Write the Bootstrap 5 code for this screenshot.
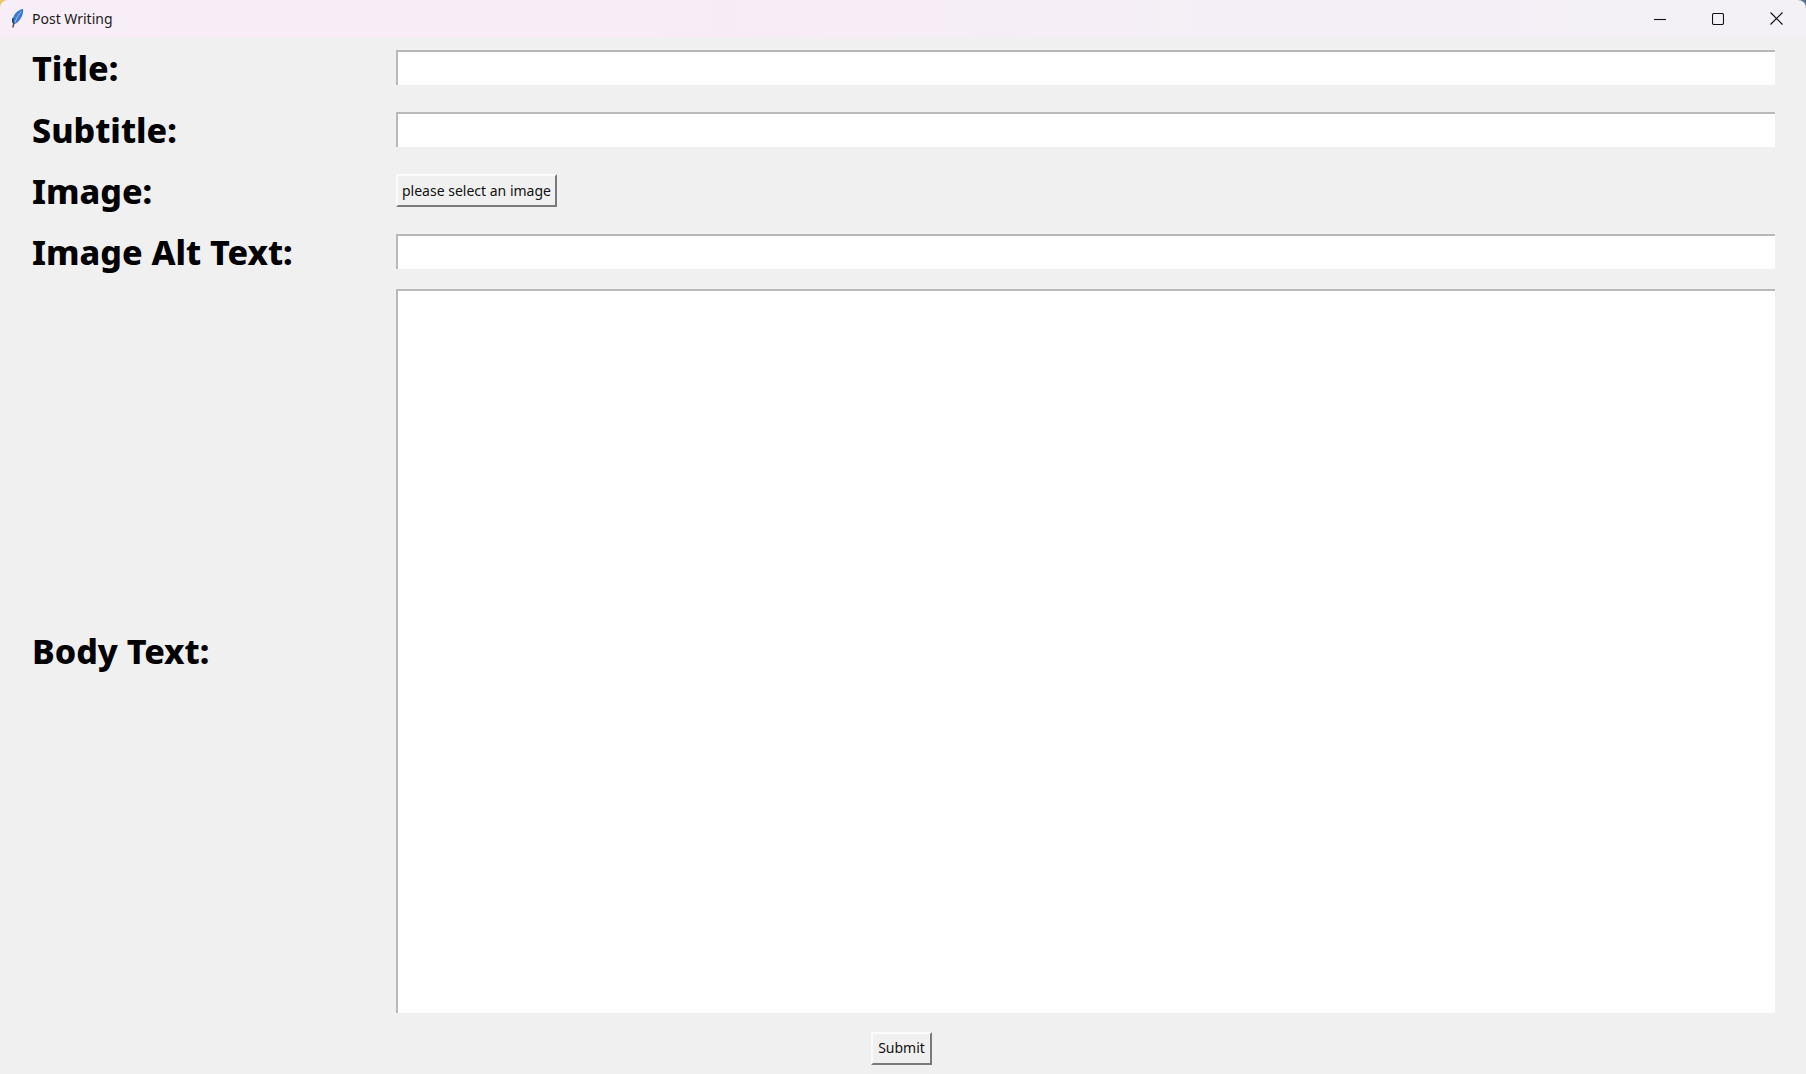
<!DOCTYPE html>
<html lang="en">

<head>
    <meta charset="UTF-8">
    <title>Post Writing</title>
    <link href="https://cdn.jsdelivr.net/npm/bootstrap@5.3.3/dist/css/bootstrap.min.css" rel="stylesheet">
    <style>
        html, body {
            height: 100%;
        }

        body {
            background: #f0f0f0;
            overflow: hidden;
        }

        .app-window {
            height: 1074px;
        }

        /* wallpaper showing through the rounded window corners */
        .title-holder {
            background: linear-gradient(90deg, #e9c766 50%, #5d7490 50%);
        }

        .title-strip {
            height: 37px;
            border-radius: 8px 8px 0 0;
            background: linear-gradient(90deg, #f8eef7 0%, #f8ecf6 35%, #f4eff6 70%, #f3f0f6 100%);
            font-family: "Noto Sans", "Open Sans", sans-serif;
            font-size: 14px;
            color: #1a1a1a;
            padding-left: 10px;
            padding-right: 1px;
        }

        .title-name {
            margin-left: 6px;
        }

        .win-btn {
            width: 58px;
            height: 37px;
        }

        .form-area {
            display: grid;
            grid-template-columns: 396px 1fr;
            grid-template-rows: 62px 62px 61px 61px 736px 55px;
        }

        .field-label {
            font-family: "Noto Sans", "DejaVu Sans", sans-serif;
            font-weight: 800;
            font-size: 34px;
            color: #000;
            padding-left: 32px;
        }

        .field-cell {
            padding-right: 31px;
            padding-bottom: 2px;
        }

        .body-cell {
            padding-bottom: 0;
        }

        .tk-entry.form-control {
            height: 35px;
            padding: 0 4px;
            border-radius: 0;
            border: 0;
            border-top: 2px solid #b9b9b9;
            border-left: 2px solid #b9b9b9;
            background: #fff;
            box-shadow: none;
            font-size: 14px;
        }

        .tk-text.form-control {
            height: 724px;
            resize: none;
        }

        .tk-btn.btn {
            font-family: "Noto Sans", "Open Sans", sans-serif;
            font-size: 14px;
            line-height: 1;
            height: 33px;
            padding: 0 4px;
            color: #111;
            background: #f0f0f0;
            border-radius: 0;
            border: 0;
            border-top: 2px solid #fbfbfb;
            border-left: 2px solid #fbfbfb;
            border-right: 2px solid #7a7a7a;
            border-bottom: 2px solid #7a7a7a;
        }

        .tk-btn.submit-btn {
            width: 61px;
            padding: 0;
        }

        .submit-row {
            grid-column: 1 / span 2;
            padding-right: 3px;
            padding-top: 3px;
        }
    </style>
</head>

<body>
    <div class="app-window d-flex flex-column">
        <!-- Window title bar -->
        <div class="title-holder">
            <div class="title-strip d-flex align-items-center justify-content-between">
                <div class="d-flex align-items-center">
                    <svg width="16" height="20" viewBox="0 0 16 20" aria-hidden="true">
                        <path d="M13 0C9 .5 4.500 4 3 9l-.5 4.500L4.500 15C8 14 11 10 12.500 5.500 13.200 3.500 13.400 1.500 13 0z" fill="#3a7ad0"/>
                        <path d="M11.500 2.500C8.500 5 6.500 9 5 13.500" stroke="#a9cdf0" stroke-width=".9" fill="none"/>
                        <path d="M3 9c-.5 2-.5 4.500 1 6" stroke="#26344d" stroke-width="1.300" fill="none"/>
                        <path d="M4 14l-1.200 4.500" stroke="#555" stroke-width="1.500" fill="none"/>
                    </svg>
                    <span class="title-name">Post Writing</span>
                </div>
                <div class="d-flex">
                    <div class="win-btn d-flex align-items-center justify-content-center">
                        <svg width="12" height="12" viewBox="0 0 12 12" aria-hidden="true"><path d="M0 6.500h12" stroke="#111" stroke-width="1.100"/></svg>
                    </div>
                    <div class="win-btn d-flex align-items-center justify-content-center">
                        <svg width="12" height="12" viewBox="0 0 12 12" aria-hidden="true"><rect x=".5" y=".5" width="11" height="11" rx="1.500" fill="none" stroke="#111" stroke-width="1.100"/></svg>
                    </div>
                    <div class="win-btn d-flex align-items-center justify-content-center">
                        <svg width="13" height="13" viewBox="0 0 13 13" aria-hidden="true"><path d="M.5.500l12 12M12.500.500l-12 12" stroke="#111" stroke-width="1.200"/></svg>
                    </div>
                </div>
            </div>
        </div>

        <!-- Post form -->
        <form class="form-area flex-grow-1">
            <label class="field-label d-flex align-items-center">Title:</label>
            <div class="field-cell d-flex align-items-center"><input class="form-control tk-entry"></div>

            <label class="field-label d-flex align-items-center">Subtitle:</label>
            <div class="field-cell d-flex align-items-center"><input class="form-control tk-entry"></div>

            <label class="field-label d-flex align-items-center">Image:</label>
            <div class="field-cell d-flex align-items-center"><button type="button" class="btn tk-btn">please select an image</button></div>

            <label class="field-label d-flex align-items-center">Image Alt Text:</label>
            <div class="field-cell d-flex align-items-center"><input class="form-control tk-entry"></div>

            <label class="field-label d-flex align-items-center">Body Text:</label>
            <div class="field-cell body-cell d-flex align-items-center"><textarea class="form-control tk-entry tk-text"></textarea></div>

            <div class="submit-row d-flex align-items-center justify-content-center">
                <button type="button" class="btn tk-btn submit-btn">Submit</button>
            </div>
        </form>
    </div>
</body>

</html>
